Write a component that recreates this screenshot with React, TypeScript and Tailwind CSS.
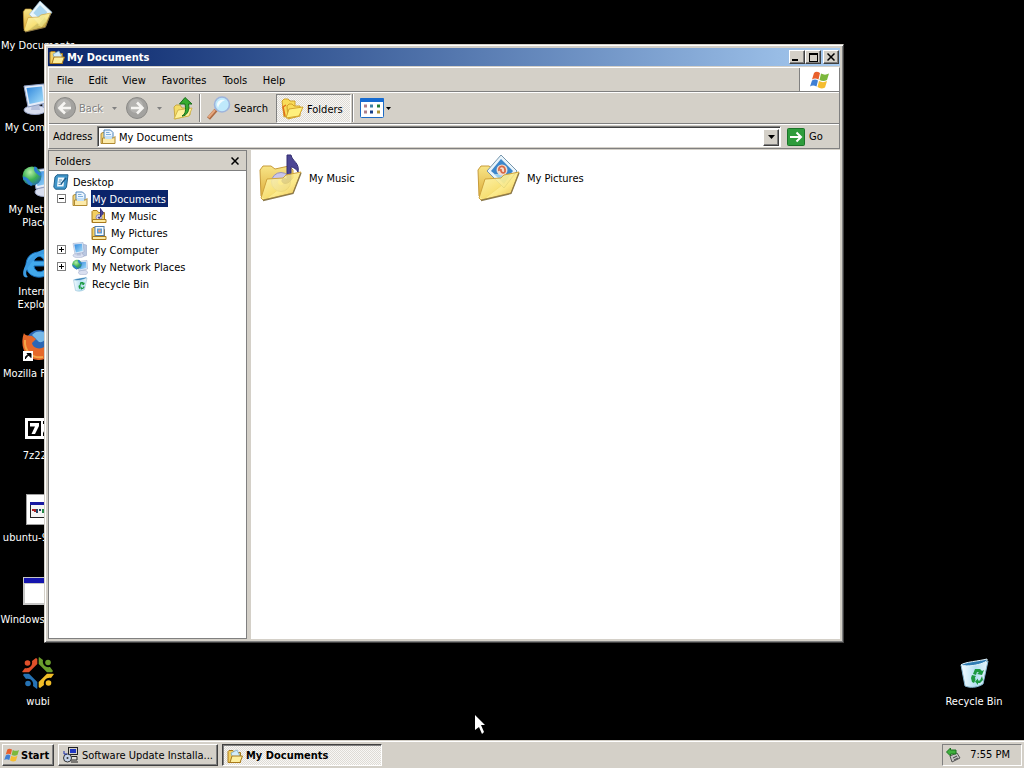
import { useState } from 'react'
import type { ReactNode } from 'react'
import clsx from 'clsx'

const raised =
  'bg-[#d4d0c8] border border-t-white border-l-white border-r-[#404040] border-b-[#404040] shadow-[inset_-1px_-1px_0_#808080]'
const pressed =
  'border border-t-[#404040] border-l-[#404040] border-r-white border-b-white shadow-[inset_1px_1px_0_#808080] bg-[repeating-conic-gradient(#f8f7f5_0_25%,#dedbd5_0_50%)] bg-[length:2px_2px]'

interface IconProps {
  className?: string
}

/* ---------- icons ---------- */

function OpenFolder({ className, children }: IconProps & { children?: ReactNode }) {
  return (
    <svg viewBox="0 0 48 48" className={className}>
      <defs>
        <linearGradient id="folderFront" x1="0" y1="0" x2="1" y2="1">
          <stop offset="0" stopColor="#fffbc4" />
          <stop offset="0.6" stopColor="#fbe573" />
          <stop offset="1" stopColor="#dfa92c" />
        </linearGradient>
        <linearGradient id="folderBack" x1="0" y1="0" x2="0" y2="1">
          <stop offset="0" stopColor="#f8e587" />
          <stop offset="1" stopColor="#dca935" />
        </linearGradient>
      </defs>
      <path d="M2 16 L5 12 L13 12 L17 15 L31 12 L35 16 L35 24 L8 45 L3 42 Z" fill="url(#folderBack)" stroke="#c79b3a" />
      {children}
      <path d="M3 44 L9 25 L25 24 L28 21 L43 18 L35 39 L5 46 Z" fill="url(#folderFront)" fillOpacity="0.85" stroke="#cfa33c" />
      <path d="M5 46.500 L35 39.500 L43 19" fill="none" stroke="#8c7a4c" strokeWidth="1.300" />
    </svg>
  )
}

function MusicFolder({ className }: IconProps) {
  return (
    <OpenFolder className={className}>
      <circle cx="23" cy="28" r="9.500" fill="#c9c5ea" stroke="#9793bd" />
      <circle cx="23" cy="28" r="3" fill="#fff3b8" />
      <path d="M29 26 V1 L33 1 C34 7 42 9 40 18 C38 14 34 13 33 13 V26 C30 31 23 30 24 26 C25 24 28 24 29 26 Z" fill="#4c4694" stroke="#322d70" />
    </OpenFolder>
  )
}

function PicturesFolder({ className }: IconProps) {
  return (
    <OpenFolder className={className}>
      <path d="M25 1 L41 17 L28 34 L11 17 Z" fill="#e9f4fb" stroke="#7595ac" />
      <path d="M25 5 L37 17 L28 28 L15 17 Z" fill="#3c86ca" />
      <path d="M18 20 L35 20 L28 30 Z" fill="#9bd1ef" />
      <circle cx="26" cy="16" r="5.500" fill="#f2dccf" />
      <path d="M23 17 C22 11 29 11 29 16 C30 20 24 20 25 15" fill="none" stroke="#d76a47" strokeWidth="1.800" />
    </OpenFolder>
  )
}

function DocumentsFolder({ className }: IconProps) {
  return (
    <OpenFolder className={className}>
      <path d="M27 0 L45 17 L29 39 L11 20 Z" fill="#e9f6fd" stroke="#94b9d1" />
      <path d="M27 6 L38 17 L29 29 L17 18 Z" fill="#a9d5ef" />
      <path d="M24 37 L34 24 L37 30 L30 37 Z" fill="#7fbbe0" />
    </OpenFolder>
  )
}

function DocsTray({ className }: IconProps) {
  return (
    <svg viewBox="0 0 16 16" className={className}>
      <path d="M1 4.500 L3 3.500 H5 V14.500 H1 Z" fill="#f5d67a" stroke="#b08a32" />
      <path d="M4 9 V1 H10.500 L13 3.500 V9" fill="#eaf5ff" stroke="#4d82b8" />
      <path d="M6 3.500 H9.500 M6 5.500 H11" stroke="#7eaedb" />
      <path d="M2.500 9 H13.500 L15 7.500 V14.500 H2.500 Z" fill="#fdebaa" stroke="#b08a32" />
      <rect x="5" y="7" width="7" height="3" fill="#c3e0f8" />
    </svg>
  )
}

function SmallFolder({ className, kind }: IconProps & { kind?: 'music' | 'pictures' | 'open' }) {
  return (
    <svg viewBox="0 0 16 16" className={className}>
      <path d="M1 3.500 L2 2.500 H6 L7.500 4.500 H13.500 V14.500 H1 Z" fill="#f3cf62" stroke="#a97a1c" />
      {kind === 'music' && (
        <>
          <circle cx="8" cy="9.500" r="3" fill="#dcd9ef" stroke="#8c87b4" />
          <path d="M9.500 9 V0.500 C10 3 13 3 12 6.500 M9 9.500 C7 8 6 11 9.500 10" fill="#4c4694" stroke="#37317c" />
        </>
      )}
      {kind === 'pictures' && (
        <>
          <rect x="4" y="1.500" width="9" height="9" fill="#f6fbff" stroke="#527fae" />
          <rect x="6" y="3.500" width="5" height="5" fill="#5a9dd8" />
          <circle cx="8.500" cy="6" r="1.400" fill="#e79a7c" />
        </>
      )}
      {kind === 'open' && <path d="M4 5 L10 2 L13 8 L6 11 Z" fill="#d3ecfa" stroke="#6da0c0" strokeWidth="0.700" />}
      {kind === 'pictures' || kind === 'music' ? (
        <path d="M1.500 11.500 H15 V14.500 H1.500 Z" fill="#fdeaa0" stroke="#a97a1c" />
      ) : (
        <path d="M3 14.500 L5 8 H15.500 L13 14.500 Z" fill="#fdee9c" stroke="#a97a1c" />
      )}
    </svg>
  )
}

function DesktopIcon({ className }: IconProps) {
  return (
    <svg viewBox="0 0 16 16" className={className}>
      <path d="M4 0.800 H15 L13.500 13 L12 15.200 H2.500 L0.800 13 L2 3 Z" fill="#4096ca" stroke="#20608c" />
      <path d="M5 3.500 H11.500 L10.500 12.500 H4 Z" fill="#f1f8fc" />
      <path d="M6 6 H9 M5.500 8 H8 M5.500 10.500 H9" stroke="#5c95bc" />
      <path d="M8 10 L13 4" stroke="#1a5a8a" strokeWidth="1.500" />
    </svg>
  )
}

function Computer({ className, globe }: IconProps & { globe?: boolean }) {
  return (
    <svg viewBox="0 0 32 32" className={className}>
      <defs>
        <linearGradient id="screen" x1="0" y1="0" x2="1" y2="1">
          <stop offset="0" stopColor="#2f86dc" />
          <stop offset="1" stopColor="#a9e1fb" />
        </linearGradient>
        <radialGradient id="globe" cx="0.4" cy="0.3" r="0.8">
          <stop offset="0" stopColor="#b5f0a8" />
          <stop offset="0.5" stopColor="#3fb153" />
          <stop offset="1" stopColor="#1c5fb8" />
        </radialGradient>
      </defs>
      {globe ? (
        <>
          <ellipse cx="22" cy="27" rx="9" ry="4.500" fill="#d9dff0" stroke="#98a4c4" />
          <path d="M11 5 L30 3 L31 20 L14 24 Z" fill="#e4ecf9" stroke="#8fa0c5" />
          <path d="M13 7 L28 5.500 L29 18 L15.500 21 Z" fill="url(#screen)" />
          <circle cx="10" cy="11" r="9.500" fill="url(#globe)" />
          <path d="M1 13 C6 13 5 17 10 20 M14 2 C12 6 16 8 19 10" fill="none" stroke="#2c7fd0" strokeWidth="3" />
        </>
      ) : (
        <>
          <path d="M20 4 L29 6 V27 L21 29 Z" fill="#b9c7e1" stroke="#8b9ac0" />
          <ellipse cx="13" cy="27" rx="11" ry="4.500" fill="#d9dff0" stroke="#98a4c4" />
          <path d="M10 21 H17 L18 27 H9 Z" fill="#b7c1db" />
          <path d="M2 3 L22 1 L24 20 L6 24 Z" fill="#e4ecf9" stroke="#8fa0c5" />
          <path d="M4.500 5 L20 3.500 L21.500 18 L7.500 21 Z" fill="url(#screen)" />
        </>
      )}
    </svg>
  )
}

function RecycleBinIcon({ className }: IconProps) {
  return (
    <svg viewBox="0 0 32 32" className={className}>
      <defs>
        <linearGradient id="bin" x1="0" y1="0" x2="1" y2="0">
          <stop offset="0" stopColor="#f4fbff" />
          <stop offset="0.55" stopColor="#b4e0f2" />
          <stop offset="1" stopColor="#e6f5fc" />
        </linearGradient>
      </defs>
      <path d="M3 8 L30 4 L25 27 C19 31 12 31 7 29 Z" fill="url(#bin)" stroke="#86b6d0" />
      <path d="M3 8 C6 5 22 4 29 2 C31 6 11 11 3 8 Z" fill="#2f7db4" stroke="#e4f5fc" />
      <g fill="#1d9a41">
        <path d="M15 17 L17 12 H22 L24 14 L26 13 L24 18 L19 17 L21 15.500 L19 15 L18 18 Z" />
        <path d="M24 19 L25 23 L22 26 H20 V28 L17 24.500 L20 21.500 V23.500 H22 Z" />
        <path d="M14 18 L18 19 L17 20.500 L17.500 23 L16 26 L14 25 L13 21 Z" />
      </g>
    </svg>
  )
}

function InternetExplorer({ className }: IconProps) {
  return (
    <svg viewBox="0 0 32 32" className={className}>
      <path d="M30 19 H12 C13 26 20 26 23 22 H30 C26 34 4 33 4 18 C4 1 30 0 30 19 Z M12 14 H22 C21 8 13 8 12 14 Z" fill="#42a9ec" fillRule="evenodd" stroke="#1568b4" />
      <path d="M6 30 C-2 33 0 18 11 9 C18 2 31 -2 29 7 C28 4 20 5 12 13 C5 20 2 27 6 30 Z" fill="#3b9be2" />
    </svg>
  )
}

function Firefox({ className }: IconProps) {
  return (
    <svg viewBox="0 0 32 32" className={className}>
      <circle cx="17" cy="14" r="13" fill="#2b66b4" />
      <path d="M10 6 C15 0 24 2 27 8 C23 9 22 14 17 13 Z" fill="#78b9e8" />
      <path d="M2 4 C3 7 6 6 8 7 C11 6 11 9 14 10 L10 14 C11 20 20 22 25 15 L31 10 C33 23 25 32 16 31 C4 31 -3 18 2 4 Z" fill="#e5682a" />
      <path d="M3 11 C2 22 10 30 21 28" fill="none" stroke="#f5a648" strokeWidth="2" />
      <rect x="1" y="22" width="10" height="10" fill="#fff" />
      <path d="M3.500 30 C3 27 5 26 7 26 M5 24.500 H9 V28.500 Z" fill="#000" stroke="#000" />
    </svg>
  )
}

function SevenZip({ className }: IconProps) {
  return (
    <svg viewBox="0 0 32 32" className={className}>
      <rect x="3" y="7" width="29" height="21" fill="#fff" />
      <rect x="6" y="10" width="13" height="15" fill="#000" />
      <path d="M8 12 H17 V15 L13 23 H9.500 L13 15.500 H8 Z" fill="#fff" />
      <path d="M21 10 H30 V13 L25 22 H30 V25 H21 V22 L26 13 H21 Z" fill="#000" />
    </svg>
  )
}

function SetupIcon({ className }: IconProps) {
  return (
    <svg viewBox="0 0 32 32" className={className}>
      <rect x="4.500" y="1.500" width="28" height="30" fill="#fff" stroke="#a0a0a0" />
      <rect x="8.500" y="9.500" width="22" height="15" fill="#f4f4f4" stroke="#222" />
      <rect x="8" y="9" width="23" height="3" fill="#1818a0" />
      <path d="M10 17 H13 V19" stroke="#a22" strokeWidth="2" fill="none" />
      <path d="M15 16 V20 M17 17 H19" stroke="#246" strokeWidth="2" />
      <path d="M21 16 V20 M23 18 H26" stroke="#284" strokeWidth="2" />
    </svg>
  )
}

function AppWindow({ className }: IconProps) {
  return (
    <svg viewBox="0 0 32 32" className={className}>
      <rect x="1" y="2" width="31" height="28" fill="#c6c6c6" />
      <rect x="2" y="3" width="30" height="5" fill="#1414ae" />
      <rect x="3" y="9" width="29" height="19" fill="#fff" />
    </svg>
  )
}

function Wubi({ className }: IconProps) {
  const parts = [
    { color: '#e0502a', rotate: 'rotate(0 16 16)' },
    { color: '#6b9e2c', rotate: 'rotate(90 16 16)' },
    { color: '#f1bd27', rotate: 'rotate(180 16 16)' },
    { color: '#2572b4', rotate: 'rotate(270 16 16)' },
  ]
  return (
    <svg viewBox="0 0 32 32" className={className}>
      {parts.map(p => (
        <g key={p.color} transform={p.rotate} fill={p.color}>
          <circle cx="5.500" cy="6" r="2.800" />
          <path d="M0 15 L3 11 C7 12 11 9 10 4 L14 1 L15.300 2 V7 L7 15.300 H1 Z" />
        </g>
      ))}
    </svg>
  )
}

function WindowsFlag({ className }: IconProps) {
  return (
    <svg viewBox="0 0 20 18" className={className}>
      <path d="M4 2 C6 0 8 1 10 2 L8.500 8.500 C6 7 4 7 2 8.500 Z" fill="#e8602c" />
      <path d="M11 2.500 C14 4 16 4 19 2.500 L17 9 C14 10.500 12 10 9.500 9 Z" fill="#7cb83c" />
      <path d="M2 9.500 C4 8 6 8 8 9.500 L6.500 15.500 C4 14 2 14 0 15.500 Z" fill="#3f7fd4" />
      <path d="M9 10 C12 11.500 14 11.500 17 10 L15 16.500 C12 18 10 17.500 7.500 16 Z" fill="#f5bd30" />
    </svg>
  )
}

function NavCircle({ className, forward }: IconProps & { forward?: boolean }) {
  return (
    <svg viewBox="0 0 24 24" className={className}>
      <circle cx="12" cy="12" r="10.500" fill="#a3a29f" stroke="#8b8a87" />
      <circle cx="11" cy="10" r="7" fill="#b5b4b1" />
      <path
        d={forward ? 'M6 12 H17 M12 6.500 L17.500 12 L12 17.500' : 'M18 12 H7 M12 6.500 L6.500 12 L12 17.500'}
        fill="none"
        stroke="#f6f5f2"
        strokeWidth="2.600"
      />
    </svg>
  )
}

function UpFolder({ className }: IconProps) {
  return (
    <svg viewBox="0 0 20 24" className={className}>
      <path d="M1 11 L3 9 H7 L9 12 H17 V19 L2 23 Z" fill="#f5dc66" stroke="#c8a945" />
      <path d="M1 23 L5 14 L19 12 L16 20 Z" fill="#fff29b" stroke="#d2b64e" />
      <path d="M9 20 C13 18 13 13 12 8 H6.500 L12 1.500 L19 8 L15.500 8 C17 14 14 20 9 20 Z" fill="#35ab2f" stroke="#176d1a" />
    </svg>
  )
}

function Magnifier({ className }: IconProps) {
  return (
    <svg viewBox="0 0 24 24" className={className}>
      <path d="M1.500 22.500 L9 14" stroke="#ad6a42" strokeWidth="4" />
      <path d="M1.500 21.500 L8 14" stroke="#e5a67d" strokeWidth="2" />
      <circle cx="15" cy="8.500" r="7.500" fill="#bfe9fb" stroke="#9eb4dc" strokeWidth="1.600" />
      <path d="M10 9 C10 4 15 3 18 4 C14 6 12 8 11 12 Z" fill="#f2fcff" />
    </svg>
  )
}

function FoldersIcon({ className }: IconProps) {
  return (
    <svg viewBox="0 0 24 22" className={className}>
      <path d="M2 3 L4 1 H8 L10 3 H15 V15 L4 19 Z" fill="#f9dc58" stroke="#d0a02a" />
      <path d="M5 18 L3 9 L6 7" fill="none" stroke="#e0701c" strokeWidth="1.500" />
      <path d="M7 8 L9 6 H12 L14 8 H20 V18 L8 21 Z" fill="#f9dc58" stroke="#d0a02a" />
      <path d="M6 20 L9 11 L23 9 L19 18 Z" fill="#fff07c" stroke="#d3a530" />
    </svg>
  )
}

function ViewsIcon({ className }: IconProps) {
  return (
    <svg viewBox="0 0 24 20" className={className}>
      <rect x="0.500" y="0.500" width="23" height="19" rx="1" fill="#fff" stroke="#1c6ac4" />
      <rect width="24" height="4" rx="1" fill="#176bd0" />
      <path d="M4 8 H7 M4 14 H7" stroke="#b0808a" strokeWidth="3" />
      <path d="M10 8 H13" stroke="#3c81a4" strokeWidth="3" />
      <path d="M10 14 H13" stroke="#173f88" strokeWidth="3" />
      <path d="M17 8 H20" stroke="#247d37" strokeWidth="3" />
      <path d="M17 14 H20" stroke="#ad9438" strokeWidth="3" />
    </svg>
  )
}

function GoIcon({ className }: IconProps) {
  return (
    <svg viewBox="0 0 18 18" className={className}>
      <rect x="0.500" y="0.500" width="17" height="17" rx="1" fill="#2e9c3c" stroke="#1b7429" />
      <path d="M3 9 H14 M9.500 4.500 L14 9 L9.500 13.500" fill="none" stroke="#fff" strokeWidth="2" />
    </svg>
  )
}

function InstallerIcon({ className }: IconProps) {
  return (
    <svg viewBox="0 0 16 16" className={className}>
      <rect x="5.500" y="0.500" width="9" height="7" fill="#d4d0c8" stroke="#222" />
      <rect x="7" y="2" width="6" height="4" fill="#2036c0" />
      <path d="M4 9.500 H14 V13 H4 Z" fill="#e2e0da" stroke="#222" />
      <circle cx="4.500" cy="11" r="4" fill="#c5d3ea" stroke="#333" />
      <circle cx="4.500" cy="11" r="1" fill="#333" />
      <path d="M1 4 V7 H4" stroke="#1a2fae" fill="none" />
      <path d="M8 15 H15" stroke="#222" />
    </svg>
  )
}

function TrayIcon({ className }: IconProps) {
  return (
    <svg viewBox="0 0 16 16" className={className}>
      <path d="M5 9 L12 6 L15 11 L7 15 Z" fill="#c3c3c3" stroke="#555" />
      <path d="M8 11 L12 9 M9 13 L13 11" stroke="#444" />
      <path d="M1.500 5 L5.500 1 V3 H11 V7 H5.500 V9 Z" fill="#3fb03d" stroke="#1c7421" />
    </svg>
  )
}

function Caret({ small }: { small?: boolean }) {
  return (
    <svg viewBox="0 0 7 4" className={clsx('shrink-0', small ? 'h-[3px] w-[5px]' : 'h-1 w-[7px]')}>
      <path d="M0 0 H7 L3.500 4 Z" fill="currentColor" />
    </svg>
  )
}

/* ---------- desktop ---------- */

const shortcuts = [
  { label: 'My Documents', icon: <DocumentsFolder className="size-8" /> },
  { label: 'My Computer', icon: <Computer className="size-8" /> },
  { label: 'My Network Places', icon: <Computer globe className="size-8" /> },
  { label: 'Internet Explorer', icon: <InternetExplorer className="size-8" /> },
  { label: 'Mozilla Firefox', icon: <Firefox className="size-8" /> },
  { label: '7z225', icon: <SevenZip className="size-8" /> },
  { label: 'ubuntu-9.04...', icon: <SetupIcon className="size-8" /> },
  { label: 'Windows Inst...', icon: <AppWindow className="size-8" /> },
  { label: 'wubi', icon: <Wubi className="size-8" /> },
]

function Shortcut({ label, icon }: { label: string; icon: ReactNode }) {
  return (
    <button className="flex h-[82px] w-[76px] flex-col items-center gap-1.5 pt-px text-center leading-[13px] text-white">
      {icon}
      <span>{label}</span>
    </button>
  )
}

/* ---------- explorer window ---------- */

const menus = [
  { label: 'File', width: 'w-8' },
  { label: 'Edit', width: 'w-[34px]' },
  { label: 'View', width: 'w-[38px]' },
  { label: 'Favorites', width: 'w-[62px]' },
  { label: 'Tools', width: 'w-10' },
  { label: 'Help', width: 'w-[38px]' },
]

function TitleBar() {
  return (
    <div className="flex h-[18px] items-center bg-linear-to-r from-[#0a246a] to-[#a6caf0] pr-px pl-px text-white">
      <SmallFolder kind="open" className="size-4" />
      <h1 className="ml-0.5 flex-1 font-bold">My Documents</h1>
      <button aria-label="Minimize" className={clsx(raised, 'flex h-3.5 w-4 items-end justify-center pb-0.5')}>
        <span className="mr-1 h-0.5 w-1.5 bg-black" />
      </button>
      <button aria-label="Maximize" className={clsx(raised, 'flex h-3.5 w-4 items-center justify-center')}>
        <span className="h-[9px] w-[9px] border border-t-2 border-black" />
      </button>
      <button aria-label="Close" className={clsx(raised, 'ml-0.5 flex h-3.5 w-4 items-center justify-center')}>
        <svg viewBox="0 0 8 8" className="size-2">
          <path d="M0.500 0.500 L7.500 7.500 M7.500 0.500 L0.500 7.500" stroke="#000" strokeWidth="1.500" />
        </svg>
      </button>
    </div>
  )
}

function MenuBar() {
  return (
    <div className="flex h-6 border-b border-[#808080]">
      <nav className="flex flex-1 items-center pt-0.5">
        {menus.map(m => (
          <button key={m.label} className={clsx(m.width, 'text-center')}>
            {m.label}
          </button>
        ))}
      </nav>
      <div className="flex w-10 items-center justify-center border-l border-[#808080] bg-white">
        <WindowsFlag className="h-[18px] w-5" />
      </div>
    </div>
  )
}

function Toolbar({ showFolders, onToggle }: { showFolders: boolean; onToggle: () => void }) {
  return (
    <div className="flex h-8 items-center border-t border-b border-t-white border-b-[#808080] pl-1">
      <button className="flex w-[50px] items-center gap-0.5 text-[#808080] [text-shadow:1px_1px_0_#fff]">
        <NavCircle className="size-6 shrink-0" />
        Back
      </button>
      <button aria-label="Back history" className="flex w-[22px] justify-center text-[#808080]">
        <Caret small />
      </button>
      <button aria-label="Forward">
        <NavCircle forward className="size-6" />
      </button>
      <button aria-label="Forward history" className="flex w-5 justify-center text-[#808080]">
        <Caret small />
      </button>
      <button aria-label="Up" className="ml-1 w-5">
        <UpFolder className="h-6 w-5" />
      </button>
      <div className="mx-1.5 h-7 w-0.5 border-l border-[#808080] bg-white" />
      <button className="flex w-[69px] items-center gap-[3px]">
        <Magnifier className="size-6 shrink-0" />
        Search
      </button>
      <button
        aria-pressed={showFolders}
        onClick={onToggle}
        className={clsx(
          'flex h-[29px] w-[75px] items-center gap-[3px] pt-0.5 pl-[3px]',
          showFolders &&
            'border border-t-[#808080] border-r-white border-b-white border-l-[#808080] bg-[repeating-conic-gradient(#f8f7f5_0_25%,#dedbd5_0_50%)] bg-[length:2px_2px]',
        )}
      >
        <FoldersIcon className="h-[22px] w-6 shrink-0" />
        Folders
      </button>
      <div className="mr-1.5 ml-px h-7 w-0.5 border-l border-[#808080] bg-white" />
      <button aria-label="Views" className="flex items-center gap-0.5">
        <ViewsIcon className="h-5 w-6" />
        <Caret small />
      </button>
    </div>
  )
}

function AddressBar() {
  const [address, setAddress] = useState('My Documents')
  return (
    <div className="flex h-6 items-center border-t border-t-white pl-1">
      <label htmlFor="address" className="w-11">
        Address
      </label>
      <div className="flex h-[21px] flex-1 items-center border border-t-[#808080] border-r-white border-b-white border-l-[#808080] bg-white pt-px pr-px pl-0.5 shadow-[inset_1px_1px_0_#404040]">
        <DocsTray className="size-4" />
        <input
          id="address"
          value={address}
          onChange={e => setAddress(e.target.value)}
          className="ml-[3px] h-4 min-w-0 flex-1 outline-none"
        />
        <button aria-label="Show addresses" className={clsx(raised, 'flex h-[17px] w-4 items-center justify-center')}>
          <Caret />
        </button>
      </div>
      <button className="flex w-[58px] items-center gap-1 pl-1.5">
        <GoIcon className="size-[18px]" />
        Go
      </button>
    </div>
  )
}

interface TreeNode {
  label: string
  icon: ReactNode
  indent: string
  toggle?: '+' | '-'
}

const tree: TreeNode[] = [
  { label: 'Desktop', icon: <DesktopIcon className="size-4" />, indent: 'pl-1' },
  { label: 'My Documents', icon: <DocsTray className="size-4" />, indent: 'pl-2', toggle: '-' },
  { label: 'My Music', icon: <SmallFolder kind="music" className="size-4" />, indent: 'pl-[42px]' },
  { label: 'My Pictures', icon: <SmallFolder kind="pictures" className="size-4" />, indent: 'pl-[42px]' },
  { label: 'My Computer', icon: <Computer className="size-4" />, indent: 'pl-2', toggle: '+' },
  { label: 'My Network Places', icon: <Computer globe className="size-4" />, indent: 'pl-2', toggle: '+' },
  { label: 'Recycle Bin', icon: <RecycleBinIcon className="size-4" />, indent: 'pl-[23px]' },
]

function FolderTree({ onClose }: { onClose: () => void }) {
  const [selected, setSelected] = useState('My Documents')

  return (
    <aside className="mr-1 flex w-[199px] flex-col border border-[#808080] bg-white">
      <div className="flex h-5 items-center justify-between border-b border-[#808080] bg-[#d4d0c8] pt-px pr-[5px] pl-1.5">
        <h2>Folders</h2>
        <button aria-label="Close folders" onClick={onClose} className="flex size-3 items-center justify-center">
          <svg viewBox="0 0 8 8" className="size-2">
            <path d="M0.500 0.500 L7.500 7.500 M7.500 0.500 L0.500 7.500" stroke="#000" strokeWidth="1.500" />
          </svg>
        </button>
      </div>
      <ul className="pt-0.5">
        {tree.map(node => (
          <li key={node.label} className={clsx('flex h-[17px] items-center', node.indent)}>
            {node.toggle && (
              <button aria-label={`Toggle ${node.label}`} className="mr-1.5 size-[9px]">
                <svg viewBox="0 0 9 9" className="size-[9px]">
                  <rect x="0.500" y="0.500" width="8" height="8" fill="#fff" stroke="#808080" />
                  <path d={node.toggle === '+' ? 'M2 4.500 H7 M4.500 2 V7' : 'M2 4.500 H7'} stroke="#000" />
                </svg>
              </button>
            )}
            {node.icon}
            <button
              onClick={() => setSelected(node.label)}
              className={clsx('ml-[3px] h-[17px] pt-px pr-0.5 pl-px', selected === node.label && 'bg-[#0a246a] text-white')}
            >
              {node.label}
            </button>
          </li>
        ))}
      </ul>
    </aside>
  )
}

function Explorer() {
  const [showFolders, setShowFolders] = useState(true)

  return (
    <section className="absolute top-11 right-[180px] bottom-[97px] left-11 flex flex-col border border-t-[#d4d0c8] border-r-[#404040] border-b-[#404040] border-l-[#d4d0c8] bg-[#d4d0c8] p-[3px] shadow-[inset_1px_1px_0_#fff,inset_-1px_-1px_0_#808080]">
      <TitleBar />
      <div className="mt-px border border-t-white border-r-[#808080] border-b-[#808080] border-l-white">
        <MenuBar />
        <Toolbar showFolders={showFolders} onToggle={() => setShowFolders(!showFolders)} />
        <AddressBar />
      </div>
      <div className="flex flex-1 pt-px">
        {showFolders && <FolderTree onClose={() => setShowFolders(false)} />}
        <main className="flex flex-1 items-start bg-white pt-1 pl-[7px]">
          <button className="flex w-[218px] items-center gap-[3px]">
            <MusicFolder className="size-12" />
            My Music
          </button>
          <button className="flex w-[218px] items-center gap-[3px]">
            <PicturesFolder className="size-12" />
            My Pictures
          </button>
        </main>
      </div>
    </section>
  )
}

/* ---------- taskbar ---------- */

function Taskbar() {
  return (
    <footer className="flex h-7 items-center gap-1 border-t border-[#d4d0c8] bg-[#d4d0c8] pr-0.5 pl-0.5 shadow-[inset_0_1px_0_#fff]">
      <button className={clsx(raised, 'flex h-[22px] w-[52px] items-center gap-px pt-px pl-px font-bold')}>
        <WindowsFlag className="h-3.5 w-4" />
        Start
      </button>
      <button className={clsx(raised, 'flex h-[22px] w-40 items-center gap-[3px] pt-px pl-1')}>
        <InstallerIcon className="size-4 shrink-0" />
        <span>Software Update Installa...</span>
      </button>
      <button className={clsx(pressed, 'flex h-[22px] w-40 items-center gap-[3px] pt-0.5 pl-1 font-bold')}>
        <SmallFolder kind="open" className="size-4 shrink-0" />
        My Documents
      </button>
      <div className="ml-auto flex h-[22px] w-20 items-center justify-between border border-t-[#808080] border-r-white border-b-white border-l-[#808080] pr-[11px] pl-0.5">
        <TrayIcon className="size-4" />
        <time>7:55 PM</time>
      </div>
    </footer>
  )
}

export default function App() {
  return (
    <div className="flex h-screen flex-col overflow-hidden bg-black font-['DejaVu_Sans_Condensed','DejaVu_Sans',sans-serif] text-[11px] leading-[13px] text-black">
      <div className="relative flex-1">
        <div className="absolute top-0 left-0 flex flex-col">
          {shortcuts.map(s => (
            <Shortcut key={s.label} label={s.label} icon={s.icon} />
          ))}
        </div>
        <div className="absolute right-3 bottom-0 h-[84px]">
          <Shortcut label="Recycle Bin" icon={<RecycleBinIcon className="size-8" />} />
        </div>
        <Explorer />
        <svg viewBox="0 0 12 20" className="absolute top-[715px] left-[475px] h-5 w-3">
          <path d="M0 0 L10 10 H6 L9 17 L7 19 L4 12 L0 15 Z" fill="#fff" />
        </svg>
      </div>
      <Taskbar />
    </div>
  )
}
